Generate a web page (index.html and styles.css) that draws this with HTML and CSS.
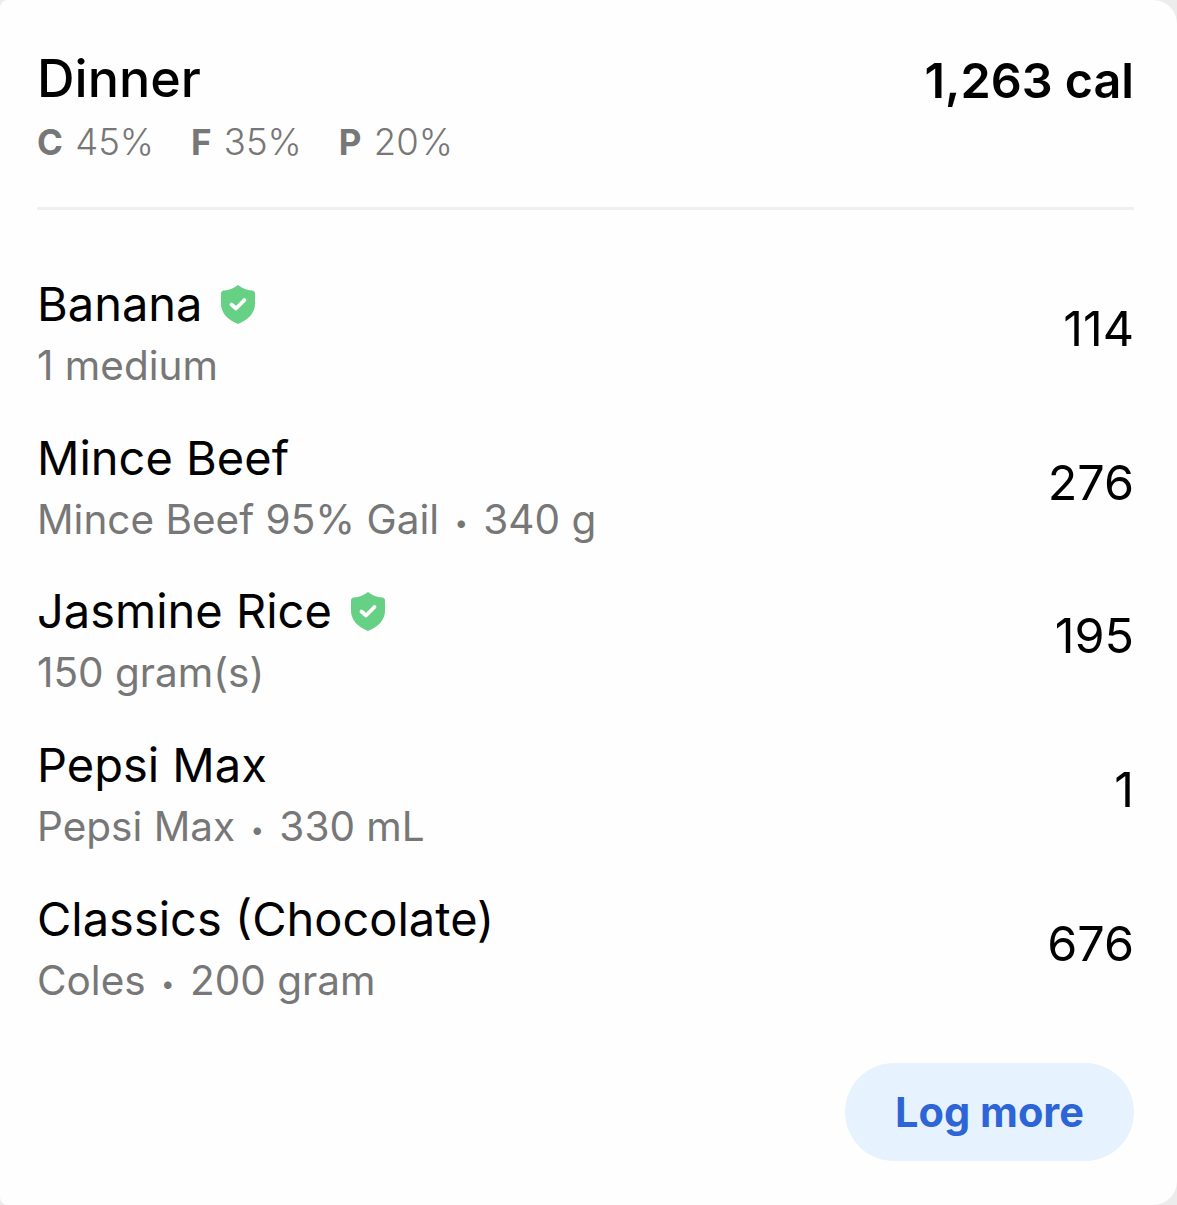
FILE: index.html
```html
<!DOCTYPE html>
<html lang="en">
<head>
  <meta charset="UTF-8" />
  <meta name="viewport" content="width=device-width, initial-scale=1.0"/>
  <title>Dinner</title>
  <link rel="stylesheet" href="styles.css">
</head>
<body>

<div class="meal-card">
  <div class="meal-header">
    <div>
      <h2 class="meal-title">Dinner</h2>
      <div class="macros">
        <span><b>C</b> 45%</span>
        <span><b>F</b> 35%</span>
        <span><b>P</b> 20%</span>
      </div>
    </div>
    <div class="meal-total">1,263 cal</div>
  </div>

  <div class="food-list">
    <div class="food-row">
      <div>
        <div class="food-name">Banana
          <svg class="verified" viewBox="0 0 34 40"><path d="M17 1 C21.500 4.500 26 6 31 6.500 C33 6.700 34 7.800 34 9.500 L34 20 C34 29 27 36 17 40 C7 36 0 29 0 20 L0 9.500 C0 7.800 1 6.700 3 6.500 C8 6 12.500 4.500 17 1 Z" fill="#66d184"/><path d="M10.500 20.500 L15 24.500 L23.500 16" fill="none" stroke="#fff" stroke-width="3.800" stroke-linecap="round" stroke-linejoin="round"/></svg>
        </div>
        <div class="food-detail">1 medium</div>
      </div>
      <div class="food-cal">114</div>
    </div>
    <div class="food-row">
      <div>
        <div class="food-name">Mince Beef</div>
        <div class="food-detail">Mince Beef 95% Gail <span class="dot">•</span> 340 g</div>
      </div>
      <div class="food-cal">276</div>
    </div>
    <div class="food-row">
      <div>
        <div class="food-name">Jasmine Rice
          <svg class="verified" viewBox="0 0 34 40"><path d="M17 1 C21.500 4.500 26 6 31 6.500 C33 6.700 34 7.800 34 9.500 L34 20 C34 29 27 36 17 40 C7 36 0 29 0 20 L0 9.500 C0 7.800 1 6.700 3 6.500 C8 6 12.500 4.500 17 1 Z" fill="#66d184"/><path d="M10.500 20.500 L15 24.500 L23.500 16" fill="none" stroke="#fff" stroke-width="3.800" stroke-linecap="round" stroke-linejoin="round"/></svg>
        </div>
        <div class="food-detail">150 gram(s)</div>
      </div>
      <div class="food-cal">195</div>
    </div>
    <div class="food-row">
      <div>
        <div class="food-name">Pepsi Max</div>
        <div class="food-detail">Pepsi Max <span class="dot">•</span> 330 mL</div>
      </div>
      <div class="food-cal">1</div>
    </div>
    <div class="food-row">
      <div>
        <div class="food-name">Classics (Chocolate)</div>
        <div class="food-detail">Coles <span class="dot">•</span> 200 gram</div>
      </div>
      <div class="food-cal">676</div>
    </div>
  </div>

  <div class="card-footer">
    <button class="log-btn">Log more</button>
  </div>
</div>

</body>
</html>
```

FILE: styles.css
```css
body {
  margin: 0;
  background: #ececec;
  font-family: Inter, "Liberation Sans", sans-serif;
}

.meal-card {
  box-sizing: border-box;
  height: 1205px;
  padding: 49px 43px 0 37px;
  background: #fefefe;
  border-radius: 8px 24px 24px 8px;
}

.meal-header {
  display: flex;
  justify-content: space-between;
  align-items: flex-start;
  height: 158px;
  border-bottom: 3px solid #f0f0f0;
}

.meal-title {
  margin: 0;
  font-size: 52px;
  line-height: 60px;
  font-weight: 550;
  color: #000;
}

.macros {
  display: flex;
  gap: 37px;
  margin-top: 11px;
  font-size: 36.500px;
  line-height: 44px;
  font-weight: 300;
  color: #777;
}

.macros b {
  font-size: 35px;
  font-weight: 700;
  margin-right: 2px;
}

.meal-total {
  font-size: 48.500px;
  line-height: 64px;
  font-weight: 600;
  color: #000;
}

.food-list {
  padding-top: 48px;
}

.food-row {
  display: flex;
  justify-content: space-between;
  align-items: center;
  height: 153.700px;
}

.food-name {
  display: flex;
  align-items: center;
  gap: 19px;
  font-size: 47px;
  line-height: 60px;
  color: #000;
}

.verified {
  width: 34px;
  height: 40px;
}

.food-detail {
  margin-top: 2px;
  font-size: 40.500px;
  line-height: 60px;
  color: #777;
}

.dot {
  margin: 0 4px;
  font-size: 24px;
  line-height: 0;
  vertical-align: 3px;
}

.food-cal {
  margin-bottom: 13px;
  font-size: 48.500px;
  color: #000;
}

.card-footer {
  display: flex;
  justify-content: flex-end;
  margin-top: 37px;
}

.log-btn {
  width: 289px;
  height: 98px;
  border: none;
  border-radius: 49px;
  background: #e6f2fd;
  color: #2d65d6;
  font-family: inherit;
  font-size: 41.500px;
  font-weight: 700;
}
```
